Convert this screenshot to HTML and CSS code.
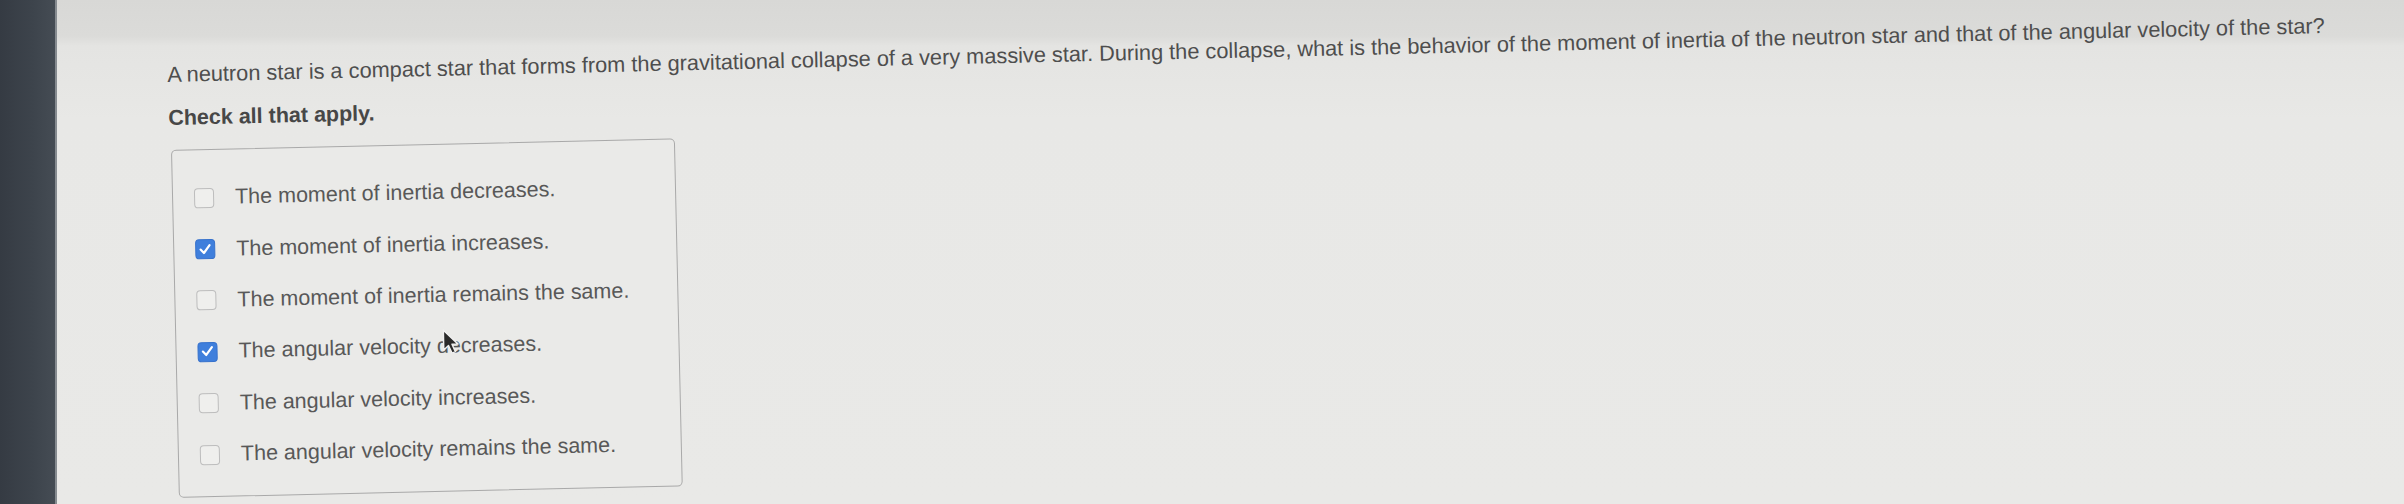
FILE: index.html
```html
<!DOCTYPE html>
<html lang="en">
<head>
<meta charset="utf-8">
<title>Neutron star question</title>
<link rel="stylesheet" href="styles.css">
</head>
<body>
<div class="screen">
  <div class="bezel"></div>
  <main class="page">
    <section class="question">
      <p class="prompt">A neutron star is a compact star that forms from the gravitational collapse of a very massive star. During the collapse, what is the behavior of the moment of inertia of the neutron star and that of the angular velocity of the star?</p>
      <p class="instr">Check all that apply.</p>
      <div class="choices">
        <label class="choice"><span class="cb"></span><span class="label">The moment of inertia decreases.</span></label>
        <label class="choice"><span class="cb checked"><svg viewBox="0 0 20 20" width="20" height="20"><path d="M5.3 10.3 L8.6 13.8 L14.4 6" fill="none" stroke="#fff" stroke-width="2.2" stroke-linecap="round" stroke-linejoin="round"/></svg></span><span class="label">The moment of inertia increases.</span></label>
        <label class="choice"><span class="cb"></span><span class="label">The moment of inertia remains the same.</span></label>
        <label class="choice"><span class="cb checked"><svg viewBox="0 0 20 20" width="20" height="20"><path d="M5.3 10.3 L8.6 13.8 L14.4 6" fill="none" stroke="#fff" stroke-width="2.2" stroke-linecap="round" stroke-linejoin="round"/></svg></span><span class="label">The angular velocity decreases.</span></label>
        <label class="choice"><span class="cb"></span><span class="label">The angular velocity increases.</span></label>
        <label class="choice"><span class="cb"></span><span class="label">The angular velocity remains the same.</span></label>
      </div>
      <svg class="cursor" viewBox="0 0 15 22" width="18" height="27"><path d="M1 1 L1 17.5 L5 13.8 L7.8 20.2 L10.6 19 L7.9 12.8 L13 12.8 Z" fill="#2a2a2a" stroke="#f0f0f0" stroke-width="1.2" stroke-linejoin="round"/></svg>
    </section>
  </main>
</div>
</body>
</html>
```
FILE: styles.css
```css
html, body {
  margin: 0;
  padding: 0;
  height: 100%;
}
body {
  background: #e7e7e5;
  font-family: "Liberation Sans", Arial, Helvetica, sans-serif;
  overflow: hidden;
}
.screen {
  display: flex;
  height: 504px;
}
.bezel {
  width: 55px;
  flex: 0 0 55px;
  background: linear-gradient(to right, #353b43 0, #3d444c 60%, #454c54 100%);
  border-right: 2px solid #868b90;
}
.page {
  flex: 1;
  padding: 62px 0 0 110px;
  background: linear-gradient(to bottom, #d8d8d6 0, #dbdbd9 36px, #e4e4e2 46px, #e8e8e6 120px, #e9e9e7 100%);
}
.question {
  position: relative;
  transform: rotate(-1.3deg);
  transform-origin: 0 0;
}
.prompt {
  margin: 0;
  font-size: 21.75px;
  line-height: 26px;
  color: #4e4e4e;
  white-space: nowrap;
}
.instr {
  margin: 17px 0 19px;
  font-size: 21.5px;
  line-height: 26px;
  font-weight: bold;
  color: #474747;
}
.choices {
  box-sizing: border-box;
  width: 504px;
  margin-left: 2px;
  border: 1.5px solid #a9a9a9;
  border-radius: 5px;
  padding: 22px 0 16px 21px;
  background: #eaeae8;
}
.choice {
  display: flex;
  align-items: center;
  height: 51.4px;
  gap: 21px;
  font-size: 21.5px;
  color: #585858;
}
.cb {
  flex: 0 0 20px;
  width: 20px;
  height: 20px;
  box-sizing: border-box;
  border: 1.5px solid #bdbdbd;
  border-radius: 4px;
  background: #efefed;
  display: flex;
}
.cb.checked {
  background: #3f7fdc;
  border-color: #3772cc;
}
.cb.checked svg {
  margin: -1.5px;
}
.cursor {
  position: absolute;
  left: 269px;
  top: 273px;
}
```
